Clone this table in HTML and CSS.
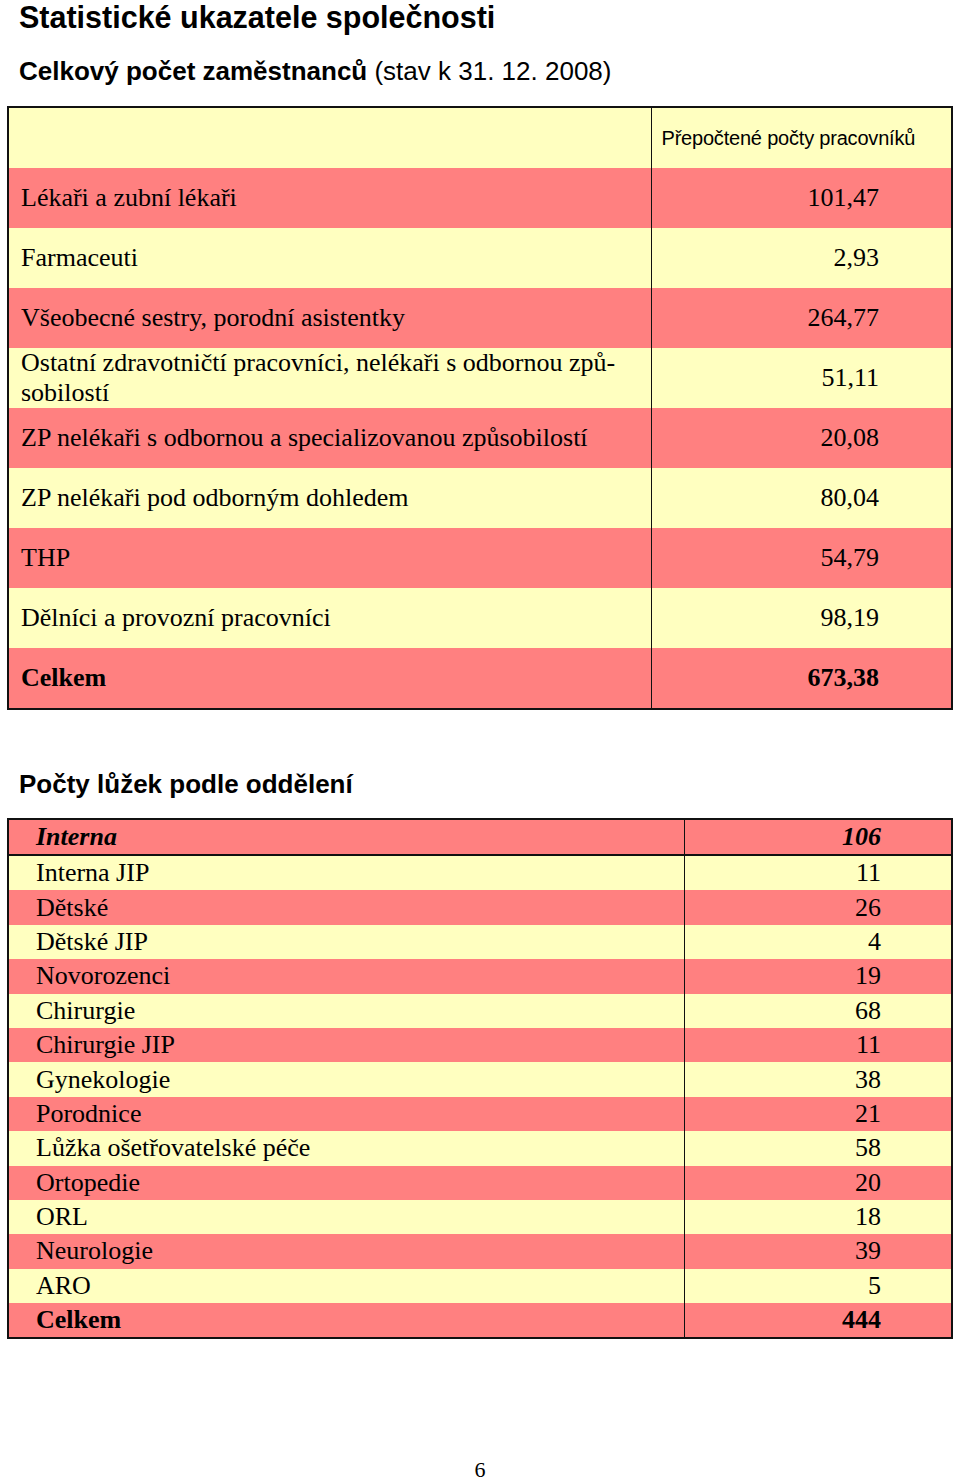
FILE: index.html
```html
<!DOCTYPE html>
<html lang="cs">
<head>
<meta charset="utf-8">
<title>Statistické ukazatele společnosti</title>
<link rel="stylesheet" href="styles.css">
</head>
<body>
<div class="page">
  <h1 class="title">Statistické ukazatele společnosti</h1>
  <h2 class="subtitle"><b>Celkový počet zaměstnanců</b> (stav k 31. 12. 2008)</h2>

  <table class="staff">
    <colgroup><col class="c1"><col class="c2"></colgroup>
    <tr class="y head"><td></td><td class="hd">Přepočtené počty pracovníků</td></tr>
    <tr class="r"><td>Lékaři a zubní lékaři</td><td class="num">101,47</td></tr>
    <tr class="y"><td>Farmaceuti</td><td class="num">2,93</td></tr>
    <tr class="r"><td>Všeobecné sestry, porodní asistentky</td><td class="num">264,77</td></tr>
    <tr class="y"><td class="two">Ostatní zdravotničtí pracovníci, nelékaři s odbornou způ-<br>sobilostí</td><td class="num">51,11</td></tr>
    <tr class="r"><td>ZP nelékaři s odbornou a specializovanou způsobilostí</td><td class="num">20,08</td></tr>
    <tr class="y"><td>ZP nelékaři pod odborným dohledem</td><td class="num">80,04</td></tr>
    <tr class="r"><td>THP</td><td class="num">54,79</td></tr>
    <tr class="y"><td>Dělníci a provozní pracovníci</td><td class="num">98,19</td></tr>
    <tr class="r total"><td>Celkem</td><td class="num">673,38</td></tr>
  </table>

  <h2 class="section">Počty lůžek podle oddělení</h2>

  <table class="beds">
    <colgroup><col class="b1"><col class="b2"></colgroup>
    <tr class="r first"><td>Interna</td><td class="num">106</td></tr>
    <tr class="y"><td>Interna JIP</td><td class="num">11</td></tr>
    <tr class="r"><td>Dětské</td><td class="num">26</td></tr>
    <tr class="y"><td>Dětské JIP</td><td class="num">4</td></tr>
    <tr class="r"><td>Novorozenci</td><td class="num">19</td></tr>
    <tr class="y"><td>Chirurgie</td><td class="num">68</td></tr>
    <tr class="r"><td>Chirurgie JIP</td><td class="num">11</td></tr>
    <tr class="y"><td>Gynekologie</td><td class="num">38</td></tr>
    <tr class="r"><td>Porodnice</td><td class="num">21</td></tr>
    <tr class="y"><td>Lůžka ošetřovatelské péče</td><td class="num">58</td></tr>
    <tr class="r"><td>Ortopedie</td><td class="num">20</td></tr>
    <tr class="y"><td>ORL</td><td class="num">18</td></tr>
    <tr class="r"><td>Neurologie</td><td class="num">39</td></tr>
    <tr class="y"><td>ARO</td><td class="num">5</td></tr>
    <tr class="r total"><td>Celkem</td><td class="num">444</td></tr>
  </table>

  <div class="pageno">6</div>
</div>
</body>
</html>
```

FILE: styles.css
```css
html, body {
  margin: 0;
  padding: 0;
  background: #ffffff;
}
body {
  width: 960px;
  height: 1480px;
  overflow: hidden;
  color: #000;
  font-family: "Liberation Serif", "Times New Roman", serif;
}
.page {
  padding: 0 7px;
  display: flex;
  flex-direction: column;
  height: 1480px;
}
.title {
  margin: 0;
  padding: 2px 0 0 12px;
  font-family: "Liberation Sans", Arial, sans-serif;
  font-size: 30.5px;
  font-weight: bold;
  line-height: 30px;
  height: 30px;
}
.subtitle {
  margin: 24px 0 0;
  padding-left: 12px;
  font-family: "Liberation Sans", Arial, sans-serif;
  font-size: 26px;
  font-weight: normal;
  line-height: 30px;
  height: 30px;
}
.subtitle b { font-weight: bold; }

table {
  border-collapse: collapse;
  width: 946px;
  table-layout: fixed;
}
td {
  padding: 0 0 0 12px;
  vertical-align: middle;
  white-space: nowrap;
}
tr.y td { background: #ffffc0; }
tr.r td { background: #ff8080; }

.staff {
  margin-top: 20px;
  border: 2px solid #111;
}
.staff .c1 { width: 643px; }
.staff td {
  height: 60px;
  font-size: 26px;
  line-height: 30px;
}
.staff td + td {
  border-left: 1px solid #111;
}
.staff td.num {
  text-align: right;
  padding: 0 72px 0 0;
}
.staff td.two { line-height: 30px; white-space: normal; }
.staff td.hd {
  text-align: left;
  padding-left: 10px;
  font-family: "Liberation Sans Narrow", "Liberation Sans", Arial, sans-serif;
  font-size: 20px;
  letter-spacing: -0.2px;
}
.staff tr.total td { font-weight: bold; }

.section {
  margin: 59px 0 0;
  padding-left: 12px;
  font-family: "Liberation Sans", Arial, sans-serif;
  font-size: 26px;
  font-weight: bold;
  line-height: 30px;
  height: 30px;
}

.beds {
  margin-top: 19px;
  border: 2px solid #111;
}
.beds .b1 { width: 676px; }
.beds td {
  height: 34.4px;
  font-size: 26px;
  line-height: 28px;
  padding-left: 27px;
}
.beds td + td { border-left: 1px solid #111; }
.beds td.num {
  text-align: right;
  padding: 0 70px 0 0;
}
.beds tr.first td {
  height: 34px;
  font-style: italic;
  font-weight: bold;
  border-bottom: 2px solid #111;
}
.beds tr.total td { font-weight: bold; }

.pageno {
  margin-top: auto;
  margin-bottom: 0;
  text-align: center;
  font-size: 22px;
  line-height: 24px;
  height: 24px;
  position: relative;
  top: 2px;
}
```
